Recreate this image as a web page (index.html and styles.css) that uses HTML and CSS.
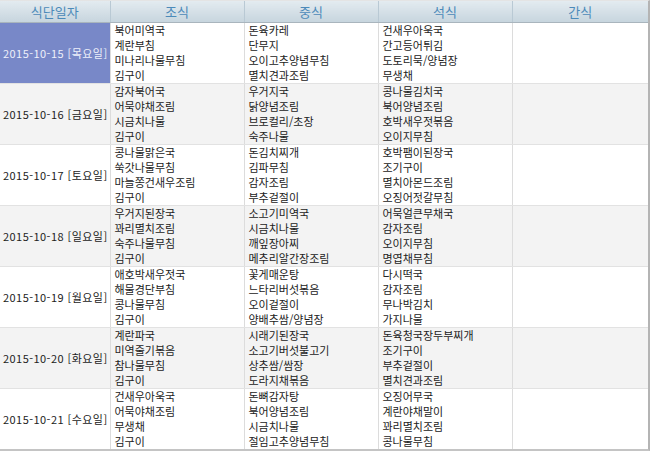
FILE: index.html
```html
<!DOCTYPE html>
<html lang="ko">
<head>
<meta charset="utf-8">
<title>식단</title>
<link rel="stylesheet" href="styles.css">
</head>
<body>
<div class="wrap">
<table class="menu">
  <colgroup>
    <col class="c-date"><col class="c-meal"><col class="c-meal"><col class="c-meal"><col class="c-snack">
  </colgroup>
  <thead>
    <tr><th>식단일자</th><th>조식</th><th>중식</th><th>석식</th><th>간식</th></tr>
  </thead>
  <tbody>
    <tr class="sel">
      <td class="date">2015-10-15 [목요일]</td>
      <td>북어미역국<br>계란부침<br>미나리나물무침<br>김구이</td>
      <td>돈육카레<br>단무지<br>오이고추양념무침<br>멸치견과조림</td>
      <td>건새우아욱국<br>간고등어튀김<br>도토리묵/양념장<br>무생채</td>
      <td></td>
    </tr>
    <tr class="alt">
      <td class="date">2015-10-16 [금요일]</td>
      <td>감자북어국<br>어묵야채조림<br>시금치나물<br>김구이</td>
      <td>우거지국<br>닭양념조림<br>브로컬리/초장<br>숙주나물</td>
      <td>콩나물김치국<br>북어양념조림<br>호박새우젓볶음<br>오이지무침</td>
      <td></td>
    </tr>
    <tr>
      <td class="date">2015-10-17 [토요일]</td>
      <td>콩나물맑은국<br>쑥갓나물무침<br>마늘쫑건새우조림<br>김구이</td>
      <td>돈김치찌개<br>김파무침<br>감자조림<br>부추겉절이</td>
      <td>호박팸이된장국<br>조기구이<br>멸치아몬드조림<br>오징어젓갈무침</td>
      <td></td>
    </tr>
    <tr class="alt">
      <td class="date">2015-10-18 [일요일]</td>
      <td>우거지된장국<br>꽈리멸치조림<br>숙주나물무침<br>김구이</td>
      <td>소고기미역국<br>시금치나물<br>깨잎장아찌<br>메추리알간장조림</td>
      <td>어묵얼큰무채국<br>감자조림<br>오이지무침<br>명엽채무침</td>
      <td></td>
    </tr>
    <tr>
      <td class="date">2015-10-19 [월요일]</td>
      <td>애호박새우젓국<br>해물경단부침<br>콩나물무침<br>김구이</td>
      <td>꽃게매운탕<br>느타리버섯볶음<br>오이겉절이<br>양배추쌈/양념장</td>
      <td>다시떡국<br>감자조림<br>무나박김치<br>가지나물</td>
      <td></td>
    </tr>
    <tr class="alt">
      <td class="date">2015-10-20 [화요일]</td>
      <td>계란파국<br>미역줄기볶음<br>참나물무침<br>김구이</td>
      <td>시래기된장국<br>소고기버섯불고기<br>상추쌈/쌈장<br>도라지채볶음</td>
      <td>돈육청국장두부찌개<br>조기구이<br>부추겉절이<br>멸치견과조림</td>
      <td></td>
    </tr>
    <tr>
      <td class="date">2015-10-21 [수요일]</td>
      <td>건새우아욱국<br>어묵야채조림<br>무생채<br>김구이</td>
      <td>돈뼈감자탕<br>북어양념조림<br>시금치나물<br>절임고추양념무침</td>
      <td>오징어무국<br>계란야채말이<br>꽈리멸치조림<br>콩나물무침</td>
      <td></td>
    </tr>
  </tbody>
</table>
</div>
</body>
</html>
```
FILE: styles.css
```css
html, body {
  margin: 0;
  padding: 0;
  background: #ffffff;
}

.wrap {
  width: 648px;
  border-top: 1px solid #e4e4e4;
  border-right: 2px solid #b4b4b4;
  border-bottom: 2px solid #c4c4c4;
}

.menu {
  width: 648px;
  border-collapse: collapse;
  table-layout: fixed;
  font-family: "Noto Sans CJK KR", "Noto Sans", sans-serif;
  font-size: 11px;
  color: #222;
}

.c-date { width: 110px; }
.c-meal { width: 134px; }
.c-snack { width: 136px; }

.menu th {
  height: 21px;
  padding: 0;
  font-weight: normal;
  font-size: 13px;
  line-height: 16px;
  color: #4c8ab9;
  background: linear-gradient(#e3ebf0, #c7d5de);
  border-left: 1px solid #b9c9d4;
  border-bottom: 1px solid #a9b5bd;
  text-align: center;
  vertical-align: middle;
}

.menu th:first-child { border-left: none; }

.menu td {
  height: 60px;
  padding: 0 4px;
  line-height: 15px;
  vertical-align: middle;
  border-left: 1px solid #dcdcdc;
  border-bottom: 1px solid #e2e2e2;
  white-space: nowrap;
  overflow: hidden;
}

.menu td:first-child { border-left: none; }

.menu td.date {
  padding: 0 0 0 3px;
  color: #222;
  letter-spacing: 0.45px;
}

.menu tr.alt td { background: #f3f3f3; }

.menu tr.sel td.date {
  background: #7888c8;
  color: #eef0fa;
}

.menu tbody tr:last-child td { border-bottom: none; }
```
